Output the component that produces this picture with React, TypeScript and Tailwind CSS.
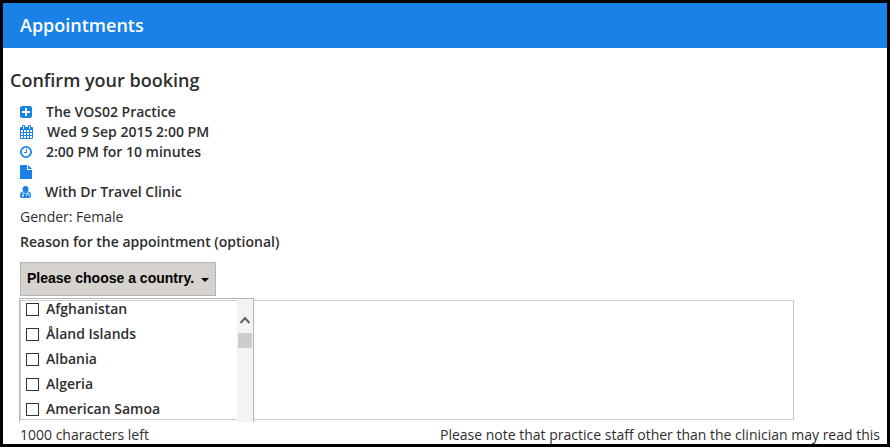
import React, { useState } from 'react';

const countries = ['Afghanistan', 'Åland Islands', 'Albania', 'Algeria', 'American Samoa'];

const PlusSquareIcon = () => (
  <svg viewBox="0 0 12 12" className="w-3 h-3 shrink-0" fill="currentColor" aria-hidden="true">
    <path
      fillRule="evenodd"
      d="M2.2 0h7.6A2.2 2.2 0 0 1 12 2.2v7.6A2.2 2.2 0 0 1 9.8 12H2.2A2.2 2.2 0 0 1 0 9.8V2.2A2.2 2.2 0 0 1 2.2 0zM5 2v3H2v2h3v3h2V7h3V5H7V2z"
    />
  </svg>
);

const CalendarIcon = () => (
  <svg viewBox="0 0 13 14" className="w-[13px] h-3.5 shrink-0" fill="currentColor" aria-hidden="true">
    <path
      fillRule="evenodd"
      d="M1 2h1V1q0-1 1-1h1q1 0 1 1v1h3V1q0-1 1-1h1q1 0 1 1v1h1q1 0 1 1v10q0 1-1 1H1q-1 0-1-1V3q0-1 1-1zM3 1v3h1V1zM9 1v3h1V1zM1 5v2h2V5zM4 5v2h2V5zM7 5v2h2V5zM10 5v2h2V5zM1 8v2h2V8zM4 8v2h2V8zM7 8v2h2V8zM10 8v2h2V8zM1 11v2h2v-2zM4 11v2h2v-2zM7 11v2h2v-2zM10 11v2h2v-2z"
    />
  </svg>
);

const ClockIcon = () => (
  <svg viewBox="0 0 12 12" className="w-3 h-3 shrink-0" fill="none" stroke="currentColor" aria-hidden="true">
    <circle cx="6" cy="6" r="5.1" strokeWidth="1.8" />
    <path d="M6.5 3v3.5H4" strokeWidth="1" />
  </svg>
);

const FileIcon = () => (
  <svg viewBox="0 0 12 14" className="w-3 h-3.5 shrink-0" fill="currentColor" aria-hidden="true">
    <path d="M0 .5Q0 0 .5 0H7v5h5v8.5q0 .5-.5.5H.5q-.5 0-.5-.5zM8 0l4 4H8z" />
  </svg>
);

const DoctorIcon = () => (
  <svg viewBox="0 0 11 12" className="w-[11px] h-3 shrink-0" aria-hidden="true">
    <circle cx="5.5" cy="3" r="3" fill="currentColor" />
    <path d="M2.5 5.5h6Q11 6 11 9.8 11 12 9 12H2Q0 12 0 9.800 0 6 2.500 5.500z" fill="currentColor" />
    <path d="M3 6v3M4 6.500l1.500 1.500L7 6.500M8 6v2M6.500 10.500V9.500Q6.500 8 8 8t1.500 1.500v1" fill="none" stroke="#fff" strokeWidth=".8" />
    <circle cx="3" cy="9.700" r=".9" fill="#fff" />
  </svg>
);

interface DetailProps {
  icon: React.ReactNode;
  children?: React.ReactNode;
}

const Detail: React.FC<DetailProps> = ({ icon, children }) => (
  <li className="flex items-center gap-3.5 h-5">
    <span className="text-[#1a82e6]">{icon}</span>
    <span className="font-semibold">{children}</span>
  </li>
);

const CountryMenu: React.FC = () => {
  const [selected, setSelected] = useState<string[]>([]);

  const toggle = (name: string) => {
    setSelected(selected.includes(name) ? selected.filter((c) => c !== name) : [...selected, name]);
  };

  return (
    <div className="absolute -top-0.5 -left-px w-[235px] h-[124px] flex border border-b-0 border-[#b5b3b5] overflow-hidden">
      <ul className="flex-1 flex flex-col gap-[5px] pl-1.5">
        {countries.map((name) => (
          <li key={name} className="h-5">
            <label className="flex items-center gap-[7px] h-full font-semibold">
              <input
                type="checkbox"
                className="appearance-none w-[13px] h-[13px] border border-[#333] bg-white checked:bg-[#1a82e6]"
                checked={selected.includes(name)}
                onChange={() => toggle(name)}
              />
              {name}
            </label>
          </li>
        ))}
      </ul>
      <div className="w-4 bg-[#f5f1f6] flex flex-col items-center pt-[17px]" aria-hidden="true">
        <svg viewBox="0 0 10 8" className="w-2.5 h-2" fill="none" stroke="#606060" strokeWidth="2">
          <path d="M0.5 7L5 2L9.5 7" />
        </svg>
        <div className="mt-[9px] w-3.5 h-[15px] bg-[#cdcdcd]" />
      </div>
    </div>
  );
};

const App: React.FC = () => {
  const [open, setOpen] = useState(true);
  const [reason, setReason] = useState('');

  return (
    <div className="min-h-screen border-[3px] border-black bg-white text-sm leading-5 text-[#2e2e2e] font-['Open_Sans',sans-serif]">
      <header className="bg-[#1a82e6] text-white h-[45px] flex items-center px-[17px]">
        <h1 className="text-lg leading-6 pb-0.5 font-semibold">Appointments</h1>
      </header>

      <main className="pt-[18px]">
        <h2 className="pl-[7px] text-lg leading-7 font-semibold">Confirm your booking</h2>

        <div className="pl-[17px] pr-[7px] pt-2">
          <ul>
            <Detail icon={<PlusSquareIcon />}>The VOS02 Practice</Detail>
            <Detail icon={<CalendarIcon />}>Wed 9 Sep 2015 2:00 PM</Detail>
            <Detail icon={<ClockIcon />}>2:00 PM for 10 minutes</Detail>
            <Detail icon={<FileIcon />} />
            <Detail icon={<DoctorIcon />}>With Dr Travel Clinic</Detail>
          </ul>

          <p className="mt-[5px]">Gender: Female</p>
          <label htmlFor="reason" className="block mt-[5px] font-semibold">
            Reason for the appointment (optional)
          </label>

          <button
            type="button"
            aria-expanded={open}
            onClick={() => setOpen(!open)}
            className="mt-2.5 h-[34px] px-1.5 pb-0.5 flex items-center gap-[7px] border border-[#b5b3b5] bg-[#d6d2cd] text-black font-bold font-['Liberation_Sans',Arial,sans-serif]"
          >
            Please choose a country.
            <svg viewBox="0 0 8 4" className="w-2 h-1 mt-1" fill="currentColor" aria-hidden="true">
              <path d="M0 0h8L4 4z" />
            </svg>
          </button>

          <div className="relative mt-1 mr-[86px]">
            <textarea
              id="reason"
              maxLength={1000}
              value={reason}
              onChange={(e) => setReason(e.target.value)}
              className="block w-full h-[120px] border border-[#ccc] resize-none outline-none"
            />
            {open && <CountryMenu />}
          </div>

          <div className="flex justify-between mt-1.5 leading-[18px]">
            <span>{1000 - reason.length} characters left</span>
            <span>Please note that practice staff other than the clinician may read this</span>
          </div>
        </div>
      </main>
    </div>
  );
};

export default App;
